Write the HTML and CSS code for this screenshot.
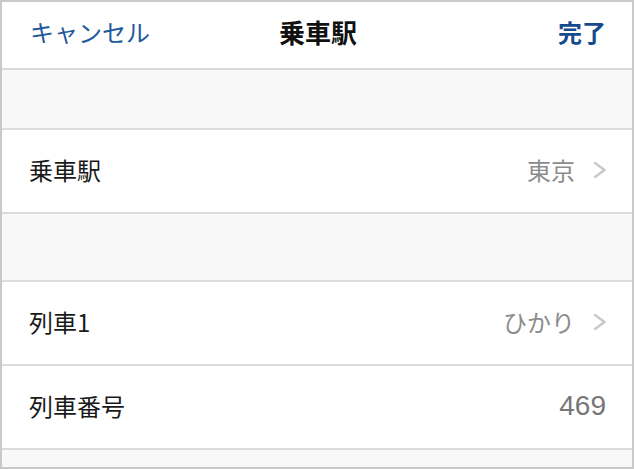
FILE: index.html
```html
<!DOCTYPE html>
<html lang="ja">
<head>
<meta charset="utf-8">
<title>乗車駅</title>
<link rel="stylesheet" href="styles.css">
</head>
<body>
<div class="frame">
  <header class="navbar">
    <span class="nav-btn cancel">キャンセル</span>
    <span class="nav-title">乗車駅</span>
    <span class="nav-btn done">完了</span>
  </header>
  <div class="spacer spacer-top"></div>
  <div class="group">
    <div class="row">
      <span class="label">乗車駅</span>
      <span class="value">東京</span>
      <svg class="chev" width="14" height="18" viewBox="0 0 14 18"><path d="M2 2 L11.5 9 L2 16" fill="none" stroke="#c7c7cc" stroke-width="2.4" stroke-linecap="round" stroke-linejoin="round"/></svg>
    </div>
  </div>
  <div class="spacer spacer-mid"></div>
  <div class="group">
    <div class="row">
      <span class="label">列車1</span>
      <span class="value">ひかり</span>
      <svg class="chev" width="14" height="18" viewBox="0 0 14 18"><path d="M2 2 L11.5 9 L2 16" fill="none" stroke="#c7c7cc" stroke-width="2.4" stroke-linecap="round" stroke-linejoin="round"/></svg>
    </div>
    <div class="row">
      <span class="label">列車番号</span>
      <span class="value num">469</span>
    </div>
  </div>
  <div class="spacer spacer-bottom"></div>
</div>
</body>
</html>
```
FILE: styles.css
```css
html, body {
  margin: 0;
  padding: 0;
  background: #ffffff;
}
body {
  font-family: "Noto Sans CJK JP", "Noto Sans", sans-serif;
}
.frame {
  width: 634px;
  height: 469px;
  box-sizing: border-box;
  border: 2px solid #c9c9c9;
  display: flex;
  flex-direction: column;
  background: #f8f8f8;
  overflow: hidden;
}
.navbar {
  flex: none;
  background: #ffffff;
  border-bottom: 2px solid #d9d9d9;
  display: flex;
  align-items: center;
  justify-content: space-between;
  padding: 0 26px 7px 28px;
  height: 59px;
}
.nav-btn {
  font-size: 24px;
  line-height: 1;
  color: #22589c;
  width: 140px;
}
.done {
  text-align: right;
  font-weight: 700;
  color: #174a8c;
}
.nav-title {
  font-size: 26px;
  font-weight: 700;
  color: #111111;
  line-height: 1;
}
.spacer {
  flex: none;
  background: #f8f8f8;
}
.spacer-top { height: 58px; }
.spacer-mid { height: 66px; }
.spacer-bottom { height: 18px; }
.group {
  background: #ffffff;
  border-top: 2px solid #dcdcdc;
  border-bottom: 2px solid #dcdcdc;
  flex: none;
}
.row {
  height: 82px;
  display: flex;
  align-items: center;
  padding: 0 25px 3px 27px;
  box-sizing: border-box;
}
.row + .row {
  border-top: 2px solid #dcdcdc;
  height: 84px;
}
.label {
  font-size: 24px;
  color: #1a1a1a;
  flex: 1;
}
.value {
  font-size: 24px;
  color: #8c8c8c;
}
.num {
  font-family: "Liberation Sans", "Noto Sans", sans-serif;
  font-size: 28px;
  color: #777777;
  margin-right: 1px;
}
.chev {
  margin-left: 18px;
  flex: none;
}
```
